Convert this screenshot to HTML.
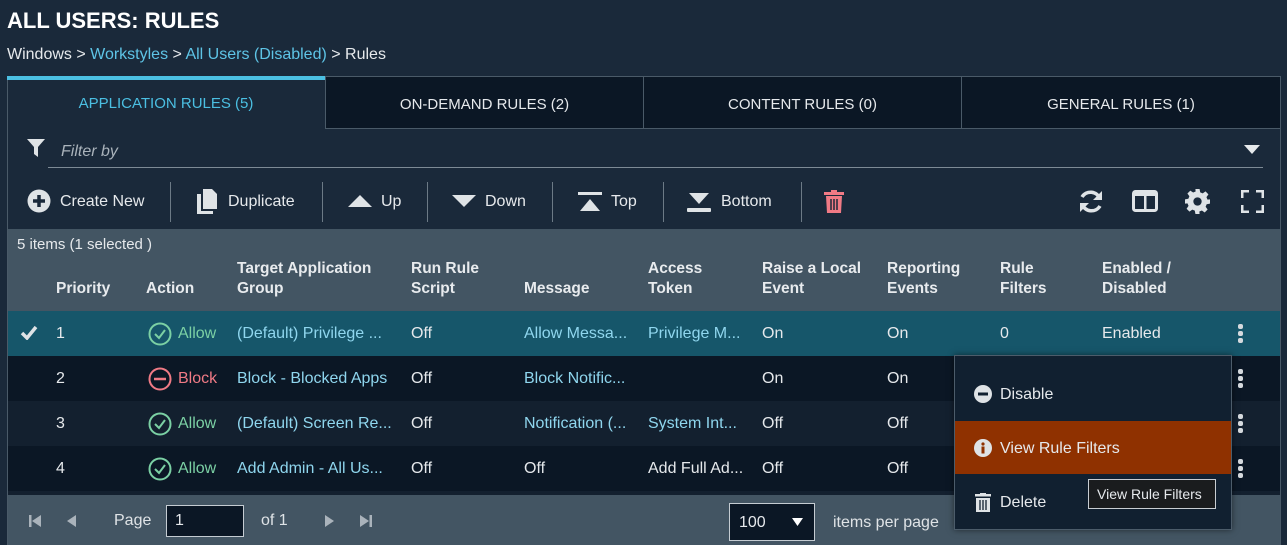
<!DOCTYPE html>
<html><head><meta charset="utf-8"><style>
*{box-sizing:border-box;margin:0;padding:0}
body{width:1287px;height:545px;overflow:hidden;background:#1a293a;font-family:"Liberation Sans",sans-serif;color:#e6e9ec;position:relative;font-size:16px}
.a{position:absolute;white-space:nowrap}
.lnk{color:#5ec4e6}
.tab{position:absolute;top:76px;height:53px;background:#0b1725;border:1px solid #4a5a68;color:#e6e9ec;font-size:15px;text-align:center;line-height:55px}
.sep{position:absolute;top:182px;width:1px;height:40px;background:#6c7a86}
.row{position:absolute;left:8px;width:1272px;height:45px}
.c{position:absolute;line-height:45px;font-size:16px;white-space:nowrap}
.hd{position:absolute;font-size:15.5px;color:#e8ebee;line-height:20px;font-weight:bold}
.dots{position:absolute;left:1238px;width:5px}
.dots i{display:block;width:5px;height:5px;border-radius:2px;background:#d5d9dd;margin-bottom:2px}
</style></head><body>
<div class="a" style="left:7px;top:8px;font-size:22px;font-weight:bold;color:#fff">ALL USERS: RULES</div>
<div class="a" style="left:7px;top:46px;font-size:16px">Windows &gt; <span class="lnk">Workstyles</span> &gt; <span class="lnk">All Users (Disabled)</span> &gt; Rules</div>
<div class="a" style="left:7px;top:76px;width:1274px;height:469px;background:#1a293a;border-left:1px solid #4a5a68;border-right:1px solid #4a5a68"></div>
<div class="a" style="left:7px;top:76px;width:318px;height:4px;background:#4bbfe2"></div>
<div class="a" style="left:7px;top:95px;width:318px;text-align:center;font-size:15px;color:#4bbfe2">APPLICATION RULES (5)</div>
<div class="tab" style="left:325px;width:319px">ON-DEMAND RULES (2)</div>
<div class="tab" style="left:643px;width:319px">CONTENT RULES (0)</div>
<div class="tab" style="left:961px;width:320px">GENERAL RULES (1)</div>
<svg class="a" style="left:26px;top:138px" width="20" height="20" viewBox="0 0 20 20"><path d="M1 1h18l-7 8v10l-4-3V9z" fill="#dfe3e6"/></svg>
<div class="a" style="left:61px;top:143px;font-style:italic;color:#aab3bb;font-size:16px">Filter by</div>
<div class="a" style="left:48px;top:167px;width:1215px;height:1px;background:#7d8a95"></div>
<svg class="a" style="left:1244px;top:145px" width="16" height="10"><path d="M0 0h16L8 9z" fill="#e6e9ec"/></svg>
<svg class="a" style="left:27px;top:189px" width="24" height="24"><circle cx="12" cy="12" r="11.5" fill="#dfe3e6"/><path d="M12 6v12M6 12h12" stroke="#1a293a" stroke-width="3.5"/></svg>
<div class="a" style="left:60px;top:193px">Create New</div>
<div class="sep" style="left:170px"></div>
<svg class="a" style="left:197px;top:189px" width="22" height="25"><path d="M6 0h9l5 5v15H6z" fill="#dfe3e6"/><path d="M0 5h4v17h12v3H0z" fill="#dfe3e6"/></svg>
<div class="a" style="left:228px;top:193px">Duplicate</div>
<div class="sep" style="left:322px"></div>
<svg class="a" style="left:348px;top:194px" width="24" height="14"><path d="M0 13L12 1 24 13z" fill="#dfe3e6"/></svg>
<div class="a" style="left:381px;top:193px">Up</div>
<div class="sep" style="left:427px"></div>
<svg class="a" style="left:452px;top:194px" width="24" height="14"><path d="M0 1h24L12 13z" fill="#dfe3e6"/></svg>
<div class="a" style="left:485px;top:193px">Down</div>
<div class="sep" style="left:552px"></div>
<svg class="a" style="left:578px;top:192px" width="24" height="20"><rect x="0" y="0" width="24" height="3" fill="#dfe3e6"/><path d="M2 19L12 7 22 19z" fill="#dfe3e6"/></svg>
<div class="a" style="left:611px;top:193px">Top</div>
<div class="sep" style="left:663px"></div>
<svg class="a" style="left:687px;top:192px" width="24" height="20"><path d="M2 1h20L12 12z" fill="#dfe3e6"/><rect x="0" y="16" width="24" height="4" rx="1" fill="#dfe3e6"/></svg>
<div class="a" style="left:721px;top:193px">Bottom</div>
<div class="sep" style="left:801px"></div>
<svg class="a" style="left:824px;top:190px" width="20" height="23"><rect x="0" y="2" width="20" height="3" fill="#f07a85"/><rect x="7" y="0" width="6" height="3" fill="#f07a85"/><path d="M2 6h16l-1 17H3z" fill="#f07a85"/><path d="M7 9v11M10 9v11M13 9v11" stroke="#1a293a" stroke-width="1.5"/></svg>
<svg class="a" style="left:1078px;top:189px" width="26" height="25" viewBox="0 0 26 25"><path d="M22 10A10 10 0 0 0 4 8M4 15a10 10 0 0 0 18 2" fill="none" stroke="#dfe3e6" stroke-width="3.5"/><path d="M24 2v9h-9zM2 23v-9h9z" fill="#dfe3e6"/></svg>
<svg class="a" style="left:1132px;top:190px" width="26" height="22"><rect x="1.5" y="1.5" width="23" height="19" rx="2" fill="none" stroke="#dfe3e6" stroke-width="3"/><rect x="1" y="1" width="24" height="5" fill="#dfe3e6"/><rect x="12" y="2" width="2.5" height="18" fill="#dfe3e6"/></svg>
<svg class="a" style="left:1185px;top:189px" width="25" height="25" viewBox="0 0 24 24"><path fill="#dfe3e6" d="M10 0h4l.6 3.2 2.4 1 2.7-1.9 2.8 2.8-1.9 2.7 1 2.4L24 10v4l-3.2.6-1 2.4 1.9 2.7-2.8 2.8-2.7-1.9-2.4 1L14 24h-4l-.6-3.2-2.4-1-2.7 1.9-2.8-2.8 1.9-2.7-1-2.4L0 14v-4l3.2-.6 1-2.4-1.900-2.7 2.8-2.8 2.7 1.9 2.4-1z"/><circle cx="12" cy="12" r="4" fill="#1a293a"/></svg>
<svg class="a" style="left:1241px;top:190px" width="23" height="23"><path d="M1 8V1h7M15 1h7v7M22 15v7h-7M8 22H1v-7" fill="none" stroke="#dfe3e6" stroke-width="3"/></svg>
<div class="a" style="left:8px;top:229px;width:1272px;height:82px;background:#435563"></div>
<div class="a" style="left:17px;top:236px;font-size:15px">5 items (1 selected )</div>
<div class="hd" style="left:56px;top:279px">Priority</div>
<div class="hd" style="left:146px;top:279px">Action</div>
<div class="hd" style="left:237px;top:259px">Target Application<br>Group</div>
<div class="hd" style="left:411px;top:259px">Run Rule<br>Script</div>
<div class="hd" style="left:524px;top:279px">Message</div>
<div class="hd" style="left:648px;top:259px">Access<br>Token</div>
<div class="hd" style="left:762px;top:259px">Raise a Local<br>Event</div>
<div class="hd" style="left:887px;top:259px">Reporting<br>Events</div>
<div class="hd" style="left:1000px;top:259px">Rule<br>Filters</div>
<div class="hd" style="left:1102px;top:259px">Enabled /<br>Disabled</div>
<div class="row" style="top:311px;background:#16566a"></div>
<div class="row" style="top:356px;background:#0b1725"></div>
<div class="row" style="top:401px;background:#13202f"></div>
<div class="row" style="top:446px;background:#0b1725"></div>
<div class="row" style="top:491px;height:4px;background:#13202f"></div>
<svg class="a" style="left:20px;top:325px" width="18" height="15"><path d="M2 8l5 5L16 2" fill="none" stroke="#dfe3e6" stroke-width="3.5"/></svg>
<div class="c" style="left:56px;top:311px">1</div>
<div class="c" style="left:56px;top:356px">2</div>
<div class="c" style="left:56px;top:401px">3</div>
<div class="c" style="left:56px;top:446px">4</div>
<svg class="a" style="left:148px;top:322px" width="24" height="24"><circle cx="12" cy="12" r="10.5" fill="none" stroke="#7bd0a4" stroke-width="2"/><path d="M7 12l4 4 6-8" fill="none" stroke="#7bd0a4" stroke-width="2"/></svg>
<svg class="a" style="left:148px;top:367px" width="24" height="24"><circle cx="12" cy="12" r="10.5" fill="none" stroke="#f07a85" stroke-width="2"/><path d="M6 12h12" stroke="#f07a85" stroke-width="2.5"/></svg>
<svg class="a" style="left:148px;top:412px" width="24" height="24"><circle cx="12" cy="12" r="10.5" fill="none" stroke="#7bd0a4" stroke-width="2"/><path d="M7 12l4 4 6-8" fill="none" stroke="#7bd0a4" stroke-width="2"/></svg>
<svg class="a" style="left:148px;top:457px" width="24" height="24"><circle cx="12" cy="12" r="10.5" fill="none" stroke="#7bd0a4" stroke-width="2"/><path d="M7 12l4 4 6-8" fill="none" stroke="#7bd0a4" stroke-width="2"/></svg>
<div class="c" style="left:178px;top:311px;color:#7bd0a4">Allow</div>
<div class="c" style="left:178px;top:356px;color:#f07a85">Block</div>
<div class="c" style="left:178px;top:401px;color:#7bd0a4">Allow</div>
<div class="c" style="left:178px;top:446px;color:#7bd0a4">Allow</div>
<div class="c" style="left:237px;top:311px;color:#8fd6ee">(Default) Privilege ...</div>
<div class="c" style="left:237px;top:356px;color:#8fd6ee">Block - Blocked Apps</div>
<div class="c" style="left:237px;top:401px;color:#8fd6ee">(Default) Screen Re...</div>
<div class="c" style="left:237px;top:446px;color:#8fd6ee">Add Admin - All Us...</div>
<div class="c" style="left:411px;top:311px">Off</div>
<div class="c" style="left:411px;top:356px">Off</div>
<div class="c" style="left:411px;top:401px">Off</div>
<div class="c" style="left:411px;top:446px">Off</div>
<div class="c" style="left:524px;top:311px;color:#8fd6ee">Allow Messa...</div>
<div class="c" style="left:524px;top:356px;color:#8fd6ee">Block Notific...</div>
<div class="c" style="left:524px;top:401px;color:#8fd6ee">Notification (...</div>
<div class="c" style="left:524px;top:446px">Off</div>
<div class="c" style="left:648px;top:311px;color:#8fd6ee">Privilege M...</div>
<div class="c" style="left:648px;top:401px;color:#8fd6ee">System Int...</div>
<div class="c" style="left:648px;top:446px">Add Full Ad...</div>
<div class="c" style="left:762px;top:311px">On</div>
<div class="c" style="left:762px;top:356px">On</div>
<div class="c" style="left:762px;top:401px">Off</div>
<div class="c" style="left:762px;top:446px">Off</div>
<div class="c" style="left:887px;top:311px">On</div>
<div class="c" style="left:887px;top:356px">On</div>
<div class="c" style="left:887px;top:401px">Off</div>
<div class="c" style="left:887px;top:446px">Off</div>
<div class="c" style="left:1000px;top:311px">0</div>
<div class="c" style="left:1102px;top:311px">Enabled</div>
<div class="dots" style="top:324px"><i></i><i></i><i></i></div>
<div class="dots" style="top:369px"><i></i><i></i><i></i></div>
<div class="dots" style="top:414px"><i></i><i></i><i></i></div>
<div class="dots" style="top:459px"><i></i><i></i><i></i></div>
<div class="a" style="left:8px;top:495px;width:1272px;height:50px;background:#435563"></div>
<svg class="a" style="left:29px;top:515px" width="12" height="12"><rect x="0" y="0" width="2.5" height="12" fill="#aab3bb"/><path d="M12 0v12L3 6z" fill="#aab3bb"/></svg>
<svg class="a" style="left:67px;top:515px" width="10" height="12"><path d="M9 0v12L0 6z" fill="#aab3bb"/></svg>
<div class="a" style="left:114px;top:512px;color:#dfe3e6">Page</div>
<div class="a" style="left:166px;top:505px;width:78px;height:32px;background:#0b1725;border:1px solid #c5ccd2;padding:6px 8px">1</div>
<div class="a" style="left:261px;top:512px;color:#dfe3e6">of 1</div>
<svg class="a" style="left:325px;top:515px" width="10" height="12"><path d="M0 0v12L9 6z" fill="#aab3bb"/></svg>
<svg class="a" style="left:360px;top:515px" width="12" height="12"><path d="M0 0v12L9 6z" fill="#aab3bb"/><rect x="9.5" y="0" width="2.5" height="12" fill="#aab3bb"/></svg>
<div class="a" style="left:729px;top:503px;width:86px;height:38px;background:#0b1725;border:1px solid #c5ccd2;padding:10px 9px">100</div>
<svg class="a" style="left:792px;top:518px" width="11" height="8"><path d="M0 0h11L5.5 8z" fill="#fff"/></svg>
<div class="a" style="left:833px;top:514px;color:#dfe3e6">items per page</div>
<div class="a" style="left:954px;top:355px;width:278px;height:175px;background:#112030;border:1px solid #4c5c6a;box-shadow:0 0 6px rgba(0,0,0,.5)"></div>
<svg class="a" style="left:974px;top:385px" width="18" height="18"><circle cx="9" cy="9" r="9" fill="#dfe3e6"/><rect x="4" y="7.5" width="10" height="3" fill="#112030"/></svg>
<div class="a" style="left:1000px;top:386px">Disable</div>
<div class="a" style="left:955px;top:421px;width:276px;height:53px;background:#8f3100"></div>
<svg class="a" style="left:974px;top:439px" width="18" height="18"><circle cx="9" cy="9" r="9" fill="#dfe3e6"/><rect x="7.5" y="7.5" width="3" height="7" fill="#8f3100"/><circle cx="9" cy="5" r="1.6" fill="#8f3100"/></svg>
<div class="a" style="left:1000px;top:440px">View Rule Filters</div>
<svg class="a" style="left:975px;top:493px" width="16" height="19"><rect x="0" y="1" width="16" height="2.5" fill="#dfe3e6"/><rect x="5" y="0" width="6" height="2" fill="#dfe3e6"/><path d="M1 5h14v14H1z" fill="#dfe3e6"/><path d="M5 7v10M8 7v10M11 7v10" stroke="#112030" stroke-width="1.3"/></svg>
<div class="a" style="left:1000px;top:494px">Delete</div>
<div class="a" style="left:1088px;top:479px;width:128px;height:30px;background:#1a1c1e;border:1px solid #c8cdd2;font-size:14px;padding:6px 8px;color:#e6e9ec">View Rule Filters</div>
</body></html>
